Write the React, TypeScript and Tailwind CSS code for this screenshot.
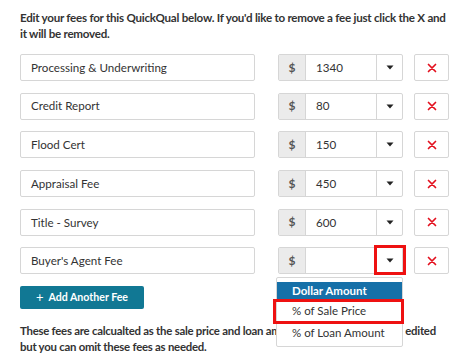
import React from 'react';

const fees = [
  { name: 'Processing & Underwriting', amount: '1340' },
  { name: 'Credit Report', amount: '80' },
  { name: 'Flood Cert', amount: '150' },
  { name: 'Appraisal Fee', amount: '450' },
  { name: 'Title - Survey', amount: '600' },
  { name: "Buyer's Agent Fee", amount: '' },
];

function Caret() {
  return (
    <svg width="8" height="5" viewBox="0 0 8 5">
      <path d="M0.5 0.5h7L4 4.5z" fill="#222" />
    </svg>
  );
}

function CloseX() {
  return (
    <svg width="10" height="10" viewBox="0 0 10 10">
      <path d="M1.5 1.5l7 7M8.5 1.5l-7 7" stroke="#e3101e" strokeWidth="1.7" strokeLinecap="round" />
    </svg>
  );
}

export default function App() {
  return (
    <div className="w-[461px] h-[354px] bg-white overflow-hidden relative" style={{ fontFamily: 'Lato, "Open Sans", sans-serif' }}>
      <div className="pl-5 pr-2 pt-[10px]">
        <p className="text-[11.6px] leading-[15.5px] font-bold text-[#333] tracking-[-0.25px] whitespace-nowrap">
          Edit your fees for this QuickQual below. If you'd like to remove a fee just click the X and
          <br />
          it will be removed.
        </p>

        <div className="mt-[13px] flex flex-col gap-[11.7px]">
          {fees.map((fee, i) => (
            <div key={i} className="flex items-center h-[27px]">
              <div className="w-[235px] shrink-0 h-full border border-[#d6d6d6] rounded-[2px] flex items-center px-[10px] text-[11.6px] text-[#333]">
                {fee.name}
              </div>
              <div className="ml-[23px] w-[125px] shrink-0 h-full flex border border-[#d6d6d6] rounded-[2px]">
                <div className="w-[27px] bg-[#ebebeb] border-r border-[#d6d6d6] flex items-center justify-center text-[12px] font-bold text-[#555]">
                  $
                </div>
                <div className="w-[71px] border-r border-[#d6d6d6] flex items-center px-[10px] text-[11.6px] text-[#333]">
                  {fee.amount}
                </div>
                <div className="flex-1 flex items-center justify-center">
                  <Caret />
                </div>
              </div>
              <div className="ml-[11px] w-[35px] shrink-0 h-full border border-[#d6d6d6] rounded-[2px] flex items-center justify-center">
                <CloseX />
              </div>
            </div>
          ))}
        </div>

        <button className="mt-[12px] w-[124px] h-[23px] bg-[#117894] rounded-[2px] text-white text-[10.6px] font-bold flex items-center justify-center gap-[5px]">
          <span className="text-[13px] font-normal leading-none -mt-[1px]">+</span>
          Add Another Fee
        </button>

        <p className="mt-[14px] text-[11.4px] leading-[15.5px] font-bold text-[#333] tracking-[-0.25px] whitespace-nowrap">
          These fees are calcualted as the sale price and loan amount change. They can be edited
          <br />
          but you can omit these fees as needed.
        </p>
      </div>

      {/* annotation around caret */}
      <div className="absolute left-[374px] top-[245px] w-[32px] h-[30px] border-[3px] border-[#ee1111]" />

      {/* dropdown menu */}
      <div className="absolute left-[276px] top-[277px] w-[127px] h-[70px] bg-white border border-[#d6d6d6] rounded-[2px] pt-[4px] text-[11.5px] whitespace-nowrap">
        <div className="h-[18px] bg-[#1670a8] text-white font-bold flex items-center px-[15px]">Dollar Amount</div>
        <div className="h-[22px] flex items-center px-[15px] text-[#333]">% of Sale Price</div>
        <div className="h-[22px] flex items-center px-[15px] text-[#333]">% of Loan Amount</div>
      </div>
      <div className="absolute left-[273px] top-[299px] w-[131px] h-[25px] border-[3px] border-[#ee1111]" />
    </div>
  );
}
